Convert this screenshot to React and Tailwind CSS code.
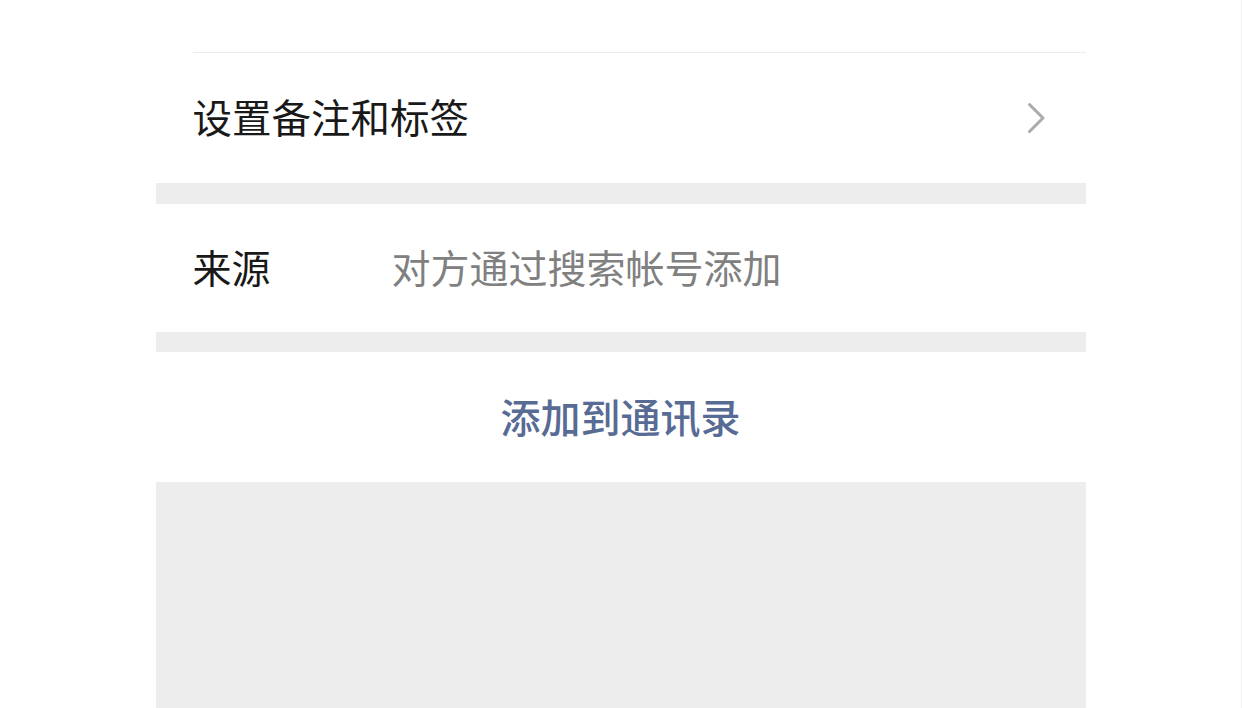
import React from "react";

function Chevron() {
  return (
    <svg width="19" height="32" viewBox="0 0 19 32" fill="none">
      <polyline
        points="2.5,2.5 16,16 2.5,29.5"
        stroke="#ababab"
        strokeWidth="3"
        strokeLinecap="round"
        strokeLinejoin="round"
      />
    </svg>
  );
}

export default function App() {
  return (
    <div
      className="w-[1242px] h-[708px] bg-white overflow-hidden border-r border-[#f0f0f0]"
      style={{ fontFamily: '"Noto Sans CJK SC", "Noto Sans", sans-serif' }}
    >
      <div className="w-[930px] mx-auto h-full flex flex-col">
        {/* end of the previous cell */}
        <div className="h-[52px] bg-white" />
        <div className="ml-[37px] h-px bg-[#ececec]" />

        <div className="h-[130px] flex items-center justify-between pl-[37px] pr-[40px] bg-white">
          <span className="text-[39.5px] leading-none text-[#191919] -translate-y-[2px]">设置备注和标签</span>
          <Chevron />
        </div>

        <div className="h-[21px] bg-[#ededed]" />

        <div className="h-[128px] flex items-center pl-[37px] bg-white">
          <span className="w-[199px] text-[39px] leading-none text-[#191919] -translate-y-[2px]">来源</span>
          <span className="text-[39px] leading-none text-[#808080] -translate-y-[2px]">
            对方通过搜索帐号添加
          </span>
        </div>

        <div className="h-[20px] bg-[#ededed]" />

        <button className="h-[130px] flex items-center justify-center bg-white">
          <span className="text-[40px] leading-none font-medium text-[#576b95] -translate-y-px">添加到通讯录</span>
        </button>

        <div className="flex-1 bg-[#ededed]" />
      </div>
    </div>
  );
}
